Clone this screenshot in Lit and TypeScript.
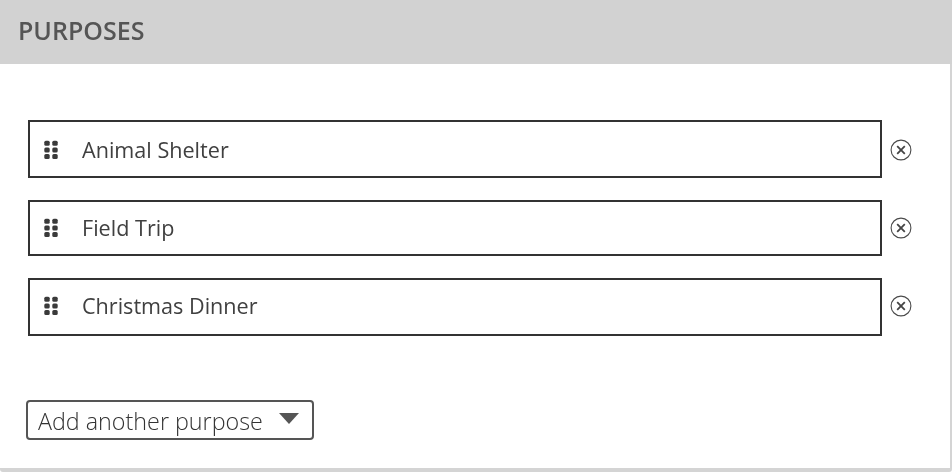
import { LitElement, html, css, svg } from "lit";
import { customElement } from "lit/decorators.js";

const grip = html`<svg class="grip" width="14" height="20" viewBox="0 0 14 20" aria-hidden="true">
  ${[0, 1, 2].map((r) =>
    [0, 1].map((c) => svg`<rect x="${0.3 + c * 8}" y="${0.7 + r * 6.7}" width="5.4" height="5" rx="1.5" fill="#3a3a3a"></rect>`)
  )}
</svg>`;

const close = html`<svg class="close" width="22" height="22" viewBox="0 0 22 22" aria-hidden="true">
  <circle cx="11" cy="11" r="9.9" fill="none" stroke="#4a4a4a" stroke-width="1.1"></circle>
  <path d="M7.2 7.2 14.8 14.8M14.8 7.2 7.2 14.8" fill="none" stroke="#444" stroke-width="1.8"></path>
</svg>`;

@customElement("app-root")
export class AppRoot extends LitElement {
  static styles = css`
    :host {
      display: block;
      width: 952px;
      height: 472px;
      font-family: "Open Sans", sans-serif;
      background: #fff;
      overflow: hidden;
    }
    .panel {
      height: 472px;
      box-sizing: border-box;
      background: #fff;
      border-right: 2px solid #d4d4d4;
      border-bottom: 4px solid #d4d4d4;
      border-bottom-right-radius: 3px;
      border-bottom-left-radius: 3px;
      display: flex;
      flex-direction: column;
    }
    .txt {
      will-change: transform;
    }
    .head {
      height: 64px;
      flex: none;
      background: #d2d2d2;
      display: flex;
      align-items: center;
      padding: 0 0 4px 18px;
      box-sizing: border-box;
      font-size: 25px;
      line-height: 34px;
      font-weight: 600;
      color: #555;
      margin-right: -2px;
    }
    .list {
      display: flex;
      flex-direction: column;
      gap: 22px;
      padding: 56px 0 0 28px;
    }
    .row {
      display: flex;
      align-items: center;
      gap: 8px;
    }
    .box {
      width: 854px;
      height: 58px;
      box-sizing: border-box;
      border: 2px solid #333;
      display: flex;
      align-items: center;
      padding-left: 14px;
      gap: 24px;
      font-size: 21.6px;
      line-height: 28px;
      color: #404040;
    }
    .row.short .box {
      height: 56px;
    }
    .row.first .box {
      padding-top: 2px;
    }
    .row.first .close {
      margin-top: 2px;
    }
    .row.last .box {
      padding-bottom: 2px;
    }
    .row.last .close {
      margin-bottom: 2px;
    }
    .grip,
    .close {
      flex: none;
    }
    .select {
      margin: 64px 0 0 26px;
      width: 288px;
      height: 40px;
      box-sizing: border-box;
      border: 2px solid #555;
      border-radius: 4px;
      display: flex;
      align-items: center;
      justify-content: space-between;
      padding: 1px 13px 0 10px;
      font-size: 23.3px;
      line-height: 32px;
      font-weight: 300;
      color: #333;
    }
    .arrow {
      width: 0;
      height: 0;
      border-left: 10.5px solid transparent;
      border-right: 10.5px solid transparent;
      border-top: 11px solid #555;
      margin-top: -4px;
    }
  `;

  render() {
    const rows = [
      ["Animal Shelter", "first"],
      ["Field Trip", "short"],
      ["Christmas Dinner", "last"],
    ] as const;
    return html`<div class="panel">
      <div class="head"><span class="txt">PURPOSES</span></div>
      <div class="list">
        ${rows.map(
          ([t, s]) => html`<div class="row ${s}">
            <div class="box">${grip}<span class="txt">${t}</span></div>
            ${close}
          </div>`
        )}
      </div>
      <div class="select"><span class="txt">Add another purpose</span><span class="arrow"></span></div>
    </div>`;
  }
}
